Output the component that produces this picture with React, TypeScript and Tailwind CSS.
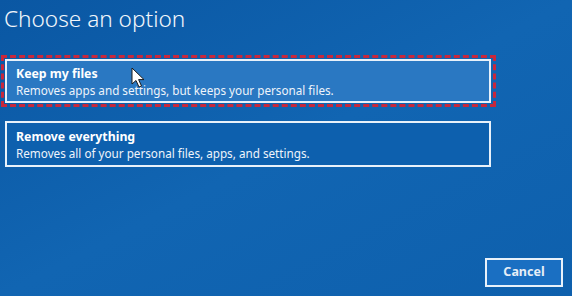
import React from 'react';

const options = [
  { title: 'Keep my files', desc: 'Removes apps and settings, but keeps your personal files.', selected: true },
  { title: 'Remove everything', desc: 'Removes all of your personal files, apps, and settings.', selected: false },
];

const Cursor = () => (
  <svg className="absolute left-[124px] top-[6px]" width="16" height="22" viewBox="0 0 16 22">
    <path d="M1 1 L1 17 L5 13.5 L8 20 L10.5 19 L7.6 12.6 L13 12.6 Z" fill="#ffffff" stroke="#1a1a1a" strokeWidth="1" strokeLinejoin="round" />
  </svg>
);

const OptionBox: React.FC<{ title: string; desc: string; selected: boolean }> = ({ title, desc, selected }) => (
  <div className={`relative w-[486px] border-2 border-[#e8f1fa] px-[9px] ${selected ? 'h-[44px] bg-[#2a78c2] pt-[4px]' : 'h-[46px] bg-[#0d60ae] pt-[5px]'}`}>
    <div className="text-[12.3px] font-bold leading-[17px] text-white">{title}</div>
    <div className="text-[11.7px] leading-[16px] text-[#eef4fb]">{desc}</div>
    {selected && <Cursor />}
  </div>
);

export default function App() {
  return (
    <div
      className="relative flex h-[296px] w-[572px] flex-col overflow-hidden bg-gradient-to-br from-[#0a57a3] via-[#1165b2] to-[#0e60ad] font-['Noto_Sans','Open_Sans',sans-serif]"
    >
      <h1 className="pl-[4px] pt-[3px] text-[22.6px] font-light leading-[32px] text-[#f2f6fb]">Choose an option</h1>

      <div className="mt-[20px] flex flex-col">
        <div className="ml-[1px] w-[495px] border-[3px] border-dashed border-[#c8283c] p-[1px]">
          <OptionBox {...options[0]} />
        </div>
        <div className="ml-[5px] mt-[14px]">
          <OptionBox {...options[1]} />
        </div>
      </div>

      <div className="mt-auto mb-[9px] mr-[9px] flex justify-end">
        <button className="h-[29px] w-[78px] border-2 border-[#e8f1fa] bg-[#1a6fc2] text-[12.5px] font-bold text-[#e6eef7]">
          Cancel
        </button>
      </div>
    </div>
  );
}
